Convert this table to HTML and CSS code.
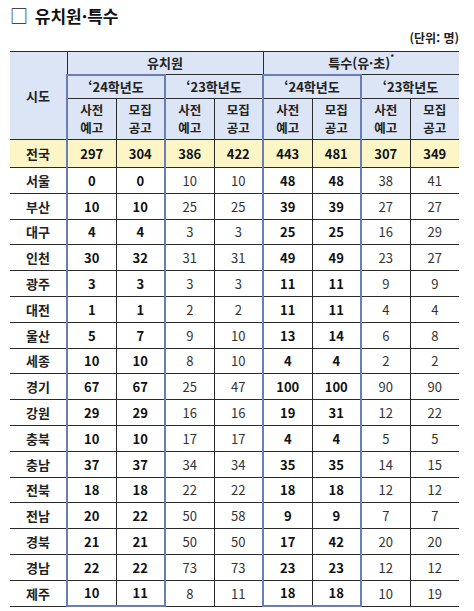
FILE: index.html
```html
<!DOCTYPE html>
<html lang="ko">
<head>
<meta charset="utf-8">
<link rel="stylesheet" href="styles.css">
</head>
<body>
<div class="page">
  <h1 class="title"><span class="box">□</span> 유치원·특수</h1>
  <div class="unit">(단위: 명)</div>
  <table class="tbl">
    <colgroup>
      <col class="c0"><col class="cd"><col class="cd"><col class="cd"><col class="cd"><col class="cd"><col class="cd"><col class="cd"><col class="cd">
    </colgroup>
    <thead>
      <tr class="h1">
        <th rowspan="3" class="el">시도</th>
        <th colspan="4">유치원</th>
        <th colspan="4" class="er">특수(유·초)<sup>*</sup></th>
      </tr>
      <tr class="h2">
        <th colspan="2" class="bl br bt">‘24학년도</th>
        <th colspan="2">‘23학년도</th>
        <th colspan="2" class="bl br bt">‘24학년도</th>
        <th colspan="2" class="er">‘23학년도</th>
      </tr>
      <tr class="h3">
        <th class="bl">사전<br>예고</th><th class="br">모집<br>공고</th>
        <th>사전<br>예고</th><th>모집<br>공고</th>
        <th class="bl">사전<br>예고</th><th class="br">모집<br>공고</th>
        <th>사전<br>예고</th><th class="er">모집<br>공고</th>
      </tr>
    </thead>
    <tbody>
      <tr class="total"><td class="el name">전국</td><td class="bl b">297</td><td class="br b">304</td><td class="b">386</td><td class="b">422</td><td class="bl b">443</td><td class="br b">481</td><td class="b">307</td><td class="er b">349</td></tr>
      <tr><td class="el name">서울</td><td class="bl b">0</td><td class="br b">0</td><td>10</td><td>10</td><td class="bl b">48</td><td class="br b">48</td><td>38</td><td class="er">41</td></tr>
      <tr><td class="el name">부산</td><td class="bl b">10</td><td class="br b">10</td><td>25</td><td>25</td><td class="bl b">39</td><td class="br b">39</td><td>27</td><td class="er">27</td></tr>
      <tr><td class="el name">대구</td><td class="bl b">4</td><td class="br b">4</td><td>3</td><td>3</td><td class="bl b">25</td><td class="br b">25</td><td>16</td><td class="er">29</td></tr>
      <tr><td class="el name">인천</td><td class="bl b">30</td><td class="br b">32</td><td>31</td><td>31</td><td class="bl b">49</td><td class="br b">49</td><td>23</td><td class="er">27</td></tr>
      <tr><td class="el name">광주</td><td class="bl b">3</td><td class="br b">3</td><td>3</td><td>3</td><td class="bl b">11</td><td class="br b">11</td><td>9</td><td class="er">9</td></tr>
      <tr><td class="el name">대전</td><td class="bl b">1</td><td class="br b">1</td><td>2</td><td>2</td><td class="bl b">11</td><td class="br b">11</td><td>4</td><td class="er">4</td></tr>
      <tr><td class="el name">울산</td><td class="bl b">5</td><td class="br b">7</td><td>9</td><td>10</td><td class="bl b">13</td><td class="br b">14</td><td>6</td><td class="er">8</td></tr>
      <tr><td class="el name">세종</td><td class="bl b">10</td><td class="br b">10</td><td>8</td><td>10</td><td class="bl b">4</td><td class="br b">4</td><td>2</td><td class="er">2</td></tr>
      <tr><td class="el name">경기</td><td class="bl b">67</td><td class="br b">67</td><td>25</td><td>47</td><td class="bl b">100</td><td class="br b">100</td><td>90</td><td class="er">90</td></tr>
      <tr><td class="el name">강원</td><td class="bl b">29</td><td class="br b">29</td><td>16</td><td>16</td><td class="bl b">19</td><td class="br b">31</td><td>12</td><td class="er">22</td></tr>
      <tr><td class="el name">충북</td><td class="bl b">10</td><td class="br b">10</td><td>17</td><td>17</td><td class="bl b">4</td><td class="br b">4</td><td>5</td><td class="er">5</td></tr>
      <tr><td class="el name">충남</td><td class="bl b">37</td><td class="br b">37</td><td>34</td><td>34</td><td class="bl b">35</td><td class="br b">35</td><td>14</td><td class="er">15</td></tr>
      <tr><td class="el name">전북</td><td class="bl b">18</td><td class="br b">18</td><td>22</td><td>22</td><td class="bl b">18</td><td class="br b">18</td><td>12</td><td class="er">12</td></tr>
      <tr><td class="el name">전남</td><td class="bl b">20</td><td class="br b">22</td><td>50</td><td>58</td><td class="bl b">9</td><td class="br b">9</td><td>7</td><td class="er">7</td></tr>
      <tr><td class="el name">경북</td><td class="bl b">21</td><td class="br b">21</td><td>50</td><td>50</td><td class="bl b">17</td><td class="br b">42</td><td>20</td><td class="er">20</td></tr>
      <tr><td class="el name">경남</td><td class="bl b">22</td><td class="br b">22</td><td>73</td><td>73</td><td class="bl b">23</td><td class="br b">23</td><td>12</td><td class="er">12</td></tr>
      <tr class="last"><td class="el name">제주</td><td class="bl bb b">10</td><td class="br bb b">11</td><td>8</td><td>11</td><td class="bl bb b">18</td><td class="br bb b">18</td><td>10</td><td class="er">19</td></tr>
    </tbody>
  </table>
</div>
</body>
</html>
```
FILE: styles.css
```css
html, body {
  margin: 0;
  padding: 0;
  background: #ffffff;
}
body {
  font-family: "Noto Sans CJK KR", "Noto Sans", sans-serif;
  color: #1a1a1a;
}
.page {
  width: 474px;
  padding: 3px 0 0 10px;
  box-sizing: border-box;
}
.title {
  margin: 0;
  font-size: 17px;
  font-weight: 700;
  line-height: 24px;
  height: 24px;
  color: #111;
}
.title .box {
  font-weight: 400;
  font-size: 18px;
  margin-right: 2px;
}
.unit {
  width: 449px;
  text-align: right;
  font-size: 12px;
  font-weight: 700;
  line-height: 18px;
  margin-top: 2px;
  color: #222;
}
.tbl {
  width: 449px;
  table-layout: fixed;
  border-collapse: collapse;
  margin-top: 4px;
  font-size: 13px;
}
.c0 { width: 57px; }
.cd { width: 49px; }
.tbl th,
.tbl td {
  border: 1px solid #2a2a2a;
  text-align: center;
  vertical-align: middle;
  padding: 0;
}
.tbl th {
  background: #dce5f5;
  font-weight: 700;
  color: #222;
  line-height: 19px;
}
.h3 th {
  font-size: 12.5px;
  line-height: 18.5px;
}
.tbl th sup {
  font-size: 8px;
  vertical-align: top;
  line-height: 8px;
}
.h1 { height: 23px; }
.h2 { height: 24px; }
.h3 { height: 41px; }
.tbl tbody tr { height: 25.8px; }
.tbl tbody tr.total { height: 28px; }
.tbl tbody tr.total td { background: #fcf6c6; }
.tbl td { color: #333; }
.tbl td.name { font-weight: 700; color: #222; }
.tbl td.b { font-weight: 700; color: #111; }
.el { border-left: none !important; }
.er { border-right: none !important; }
.tbl .bl { border-left: 2px solid #6b7db6; }
.tbl .br { border-right: 2px solid #6b7db6; }
.tbl .bt { border-top: 2px solid #6b7db6; }
.tbl .bb { border-bottom: 2px solid #6b7db6; }
```
